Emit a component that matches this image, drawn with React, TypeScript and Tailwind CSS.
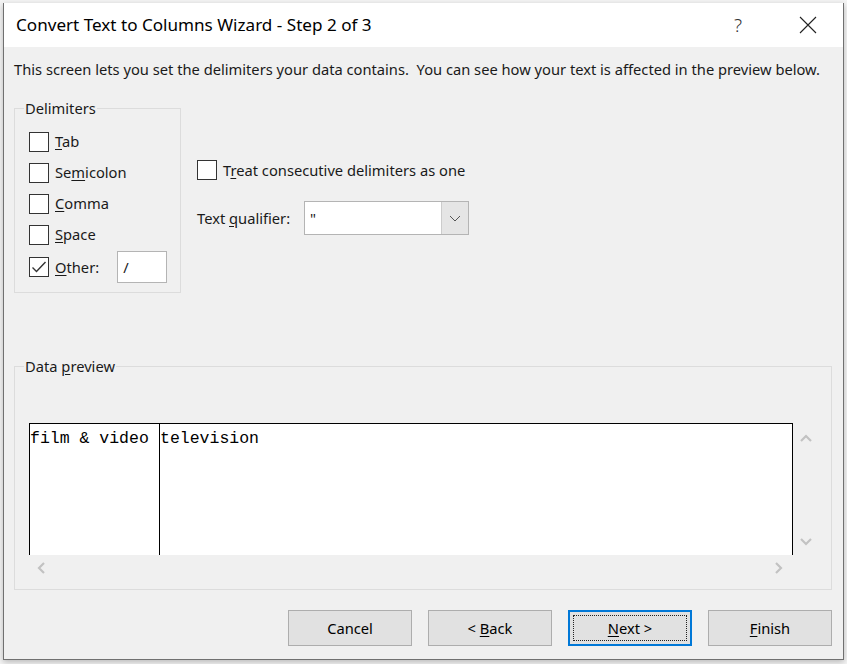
import React from "react";

function Box({ checked }: { checked?: boolean }) {
  return (
    <span className="w-[20px] h-[20px] border border-[#333333] bg-white flex items-center justify-center shrink-0">
      {checked && (
        <svg width="18" height="18" viewBox="0 0 18 18">
          <path d="M2.5 9.5 L6.5 13.5 L15.5 4" fill="none" stroke="#333333" strokeWidth="1.4" />
        </svg>
      )}
    </span>
  );
}

function Chevron({ dir }: { dir: "up" | "down" | "left" | "right" }) {
  const d =
    dir === "up"
      ? "M1 7 L6 2 L11 7"
      : dir === "down"
      ? "M1 1 L6 6 L11 1"
      : dir === "left"
      ? "M7 1 L2 6 L7 11"
      : "M1 1 L6 6 L1 11";
  const horiz = dir === "up" || dir === "down";
  return (
    <svg width={horiz ? 12 : 8} height={horiz ? 8 : 12} viewBox={horiz ? "0 0 12 8" : "0 0 8 12"}>
      <path d={d} fill="none" stroke="#c2c2c2" strokeWidth="2.2" />
    </svg>
  );
}

function Row({ label, children }: { label: React.ReactNode; children?: React.ReactNode }) {
  return (
    <div className="h-[31px] flex items-center">
      <Box />
      <span className="ml-[6px]">{label}</span>
      {children}
    </div>
  );
}

function Btn({ children, focus }: { children: React.ReactNode; focus?: boolean }) {
  return (
    <div
      className={
        focus
          ? "relative w-[124px] h-[36px] bg-[#e1e1e1] border-2 border-[#0078d7] flex items-center justify-center"
          : "relative w-[124px] h-[36px] bg-[#e1e1e1] border border-[#adadad] flex items-center justify-center"
      }
    >
      {focus && <div className="absolute inset-[3px] border border-dotted border-[#222222]" />}
      <span>{children}</span>
    </div>
  );
}

export default function App() {
  return (
    <div className="w-[847px] h-[664px] bg-[#f4f4f4] overflow-hidden pt-[3px] pl-[3px] font-['Noto_Sans',sans-serif] text-[14.7px] text-[#1a1a1a]">
      <div className="w-[841px] h-[657px] border-l border-r border-b border-[#707070] bg-[#f0f0f0] flex flex-col shadow-[0_2px_6px_rgba(0,0,0,0.25)]">
        {/* Title bar */}
        <div className="h-[44px] bg-white flex items-center shrink-0">
          <span className="pl-[12px] text-[17.1px] text-black leading-none">Convert Text to Columns Wizard - Step 2 of 3</span>
          <span className="ml-auto w-[46px] text-center text-[19px] font-light text-[#333]">?</span>
          <span className="ml-[24px] w-[46px] flex justify-center">
            <svg width="18" height="18" viewBox="0 0 18 18">
              <path d="M1 1 L17 17 M17 1 L1 17" stroke="#222" strokeWidth="1.1" />
            </svg>
          </span>
          <span className="w-[12px]" />
        </div>

        {/* Body */}
        <div className="flex-1 pl-[10px] pr-[11px]">
          <div className="mt-[12px] h-[20px] leading-[20px] whitespace-nowrap">
            This screen lets you set the delimiters your data contains.&nbsp; You can see how your text is affected in the preview below.
          </div>

          <div className="mt-[19px] flex">
            <fieldset className="w-[167px] border border-[#dcdcdc] pb-[8px] pl-[14px]">
              <legend className="ml-[-5px] px-[1px] leading-[20px]">Delimiters</legend>
              <div className="pt-[8px] flex flex-col">
                <Row label={<><u className="underline-offset-2">T</u>ab</>} />
                <Row label={<>Se<u className="underline-offset-2">m</u>icolon</>} />
                <Row label={<><u className="underline-offset-2">C</u>omma</>} />
                <Row label={<><u className="underline-offset-2">S</u>pace</>} />
                <div className="h-[34px] flex items-center">
                  <Box checked />
                  <span className="ml-[6px]"><u className="underline-offset-2">O</u>ther:</span>
                  <div className="ml-[18px] w-[50px] h-[32px] bg-white border border-[#b4b4b4] flex items-center pl-[5px]">/</div>
                </div>
              </div>
            </fieldset>

            <div className="ml-[16px] flex flex-col">
              <div className="mt-[62px] h-[20px] flex items-center">
                <Box />
                <span className="ml-[6px]">T<u className="underline-offset-2">r</u>eat consecutive delimiters as one</span>
              </div>
              <div className="mt-[21px] h-[34px] flex items-center">
                <span className="w-[107px]">Text <u className="underline-offset-2">q</u>ualifier:</span>
                <div className="w-[165px] h-[34px] bg-white border border-[#b4b4b4] flex items-stretch">
                  <span className="flex-1 pl-[5px] flex items-center">"</span>
                  <span className="w-[27px] bg-[#e5e5e5] border-l border-[#cccccc] flex items-center justify-center">
                    <svg width="12" height="7" viewBox="0 0 12 7">
                      <path d="M1 1 L6 6 L11 1" fill="none" stroke="#555" strokeWidth="1" />
                    </svg>
                  </span>
                </div>
              </div>
            </div>
          </div>

          <fieldset className="mt-[63px] w-[818px] border border-[#dcdcdc] pb-[8px] pl-[14px]">
            <legend className="ml-[-5px] px-[1px] leading-[20px]">Data <u className="underline-offset-2">p</u>review</legend>
            <div className="mt-[47px] flex">
              <div className="w-[764px] h-[132px] bg-white border-t border-l border-r border-black flex font-['Liberation_Mono',monospace] text-[16.5px] text-black">
                <div className="w-[130px] border-r border-black pt-[5px] leading-[20px] whitespace-pre">film &amp; video</div>
                <div className="pt-[5px] leading-[20px]">television</div>
              </div>
              <div className="w-[26px] h-[132px] flex flex-col items-center justify-between pt-[11px] pb-[9px]">
                <Chevron dir="up" />
                <Chevron dir="down" />
              </div>
            </div>
            <div className="w-[764px] h-[26px] flex items-center justify-between pl-[8px] pr-[10px]">
              <Chevron dir="left" />
              <Chevron dir="right" />
            </div>
          </fieldset>

          <div className="mt-[20px] flex justify-end gap-[16px] text-black">
            <Btn>Cancel</Btn>
            <Btn>&lt; <u className="underline-offset-2">B</u>ack</Btn>
            <Btn focus><u className="underline-offset-2">N</u>ext &gt;</Btn>
            <Btn><u className="underline-offset-2">F</u>inish</Btn>
          </div>
        </div>
      </div>
    </div>
  );
}
